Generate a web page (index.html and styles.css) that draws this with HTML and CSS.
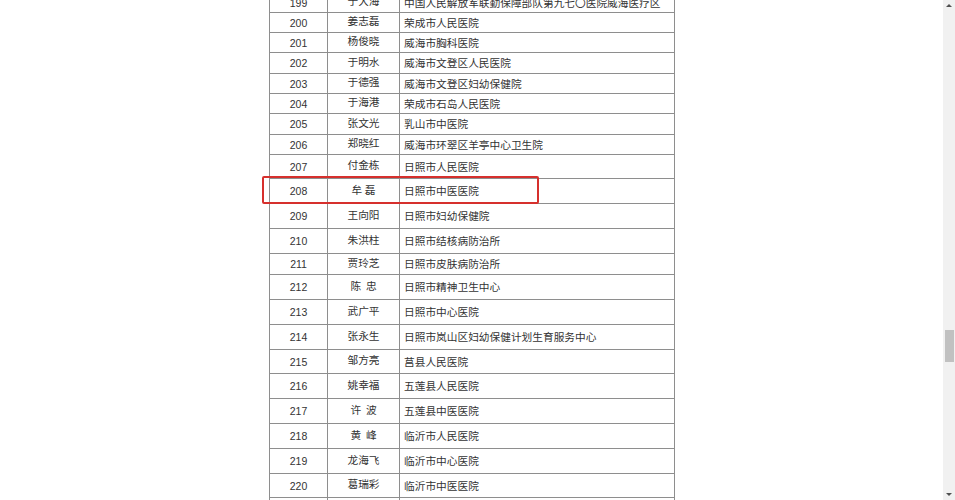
FILE: index.html
```html
<!DOCTYPE html>
<html lang="zh-CN">
<head>
<meta charset="utf-8">
<title>名单</title>
<link rel="stylesheet" href="styles.css">
</head>
<body>
<div class="page">
  <div class="sheet">
    <div class="row h20"><div class="c num">199</div><div class="c name">于大海</div><div class="c org">中国人民解放军联勤保障部队第九七〇医院威海医疗区</div></div>
    <div class="row h20"><div class="c num">200</div><div class="c name">姜志磊</div><div class="c org">荣成市人民医院</div></div>
    <div class="row h20"><div class="c num">201</div><div class="c name">杨俊晓</div><div class="c org">威海市胸科医院</div></div>
    <div class="row h21"><div class="c num">202</div><div class="c name">于明水</div><div class="c org">威海市文登区人民医院</div></div>
    <div class="row h20"><div class="c num">203</div><div class="c name">于德强</div><div class="c org">威海市文登区妇幼保健院</div></div>
    <div class="row h20"><div class="c num">204</div><div class="c name">于海港</div><div class="c org">荣成市石岛人民医院</div></div>
    <div class="row h21"><div class="c num">205</div><div class="c name">张文光</div><div class="c org">乳山市中医院</div></div>
    <div class="row h20"><div class="c num">206</div><div class="c name">郑晓红</div><div class="c org">威海市环翠区羊亭中心卫生院</div></div>
    <div class="row h24"><div class="c num">207</div><div class="c name">付金栋</div><div class="c org">日照市人民医院</div></div>
    <div class="row h25"><div class="c num">208</div><div class="c name">牟&nbsp;磊</div><div class="c org">日照市中医医院</div></div>
    <div class="row h25"><div class="c num">209</div><div class="c name">王向阳</div><div class="c org">日照市妇幼保健院</div></div>
    <div class="row h25"><div class="c num">210</div><div class="c name">朱洪柱</div><div class="c org">日照市结核病防治所</div></div>
    <div class="row h21"><div class="c num">211</div><div class="c name">贾玲芝</div><div class="c org">日照市皮肤病防治所</div></div>
    <div class="row h25"><div class="c num">212</div><div class="c name">陈&nbsp;&nbsp;忠</div><div class="c org">日照市精神卫生中心</div></div>
    <div class="row h25"><div class="c num">213</div><div class="c name">武广平</div><div class="c org">日照市中心医院</div></div>
    <div class="row h25"><div class="c num">214</div><div class="c name">张永生</div><div class="c org">日照市岚山区妇幼保健计划生育服务中心</div></div>
    <div class="row h24"><div class="c num">215</div><div class="c name">邹方亮</div><div class="c org">莒县人民医院</div></div>
    <div class="row h25"><div class="c num">216</div><div class="c name">姚幸福</div><div class="c org">五莲县人民医院</div></div>
    <div class="row h25"><div class="c num">217</div><div class="c name">许&nbsp;&nbsp;波</div><div class="c org">五莲县中医医院</div></div>
    <div class="row h25"><div class="c num">218</div><div class="c name">黄&nbsp;&nbsp;峰</div><div class="c org">临沂市人民医院</div></div>
    <div class="row h25"><div class="c num">219</div><div class="c name">龙海飞</div><div class="c org">临沂市中心医院</div></div>
    <div class="row h24"><div class="c num">220</div><div class="c name">葛瑞彩</div><div class="c org">临沂市中医医院</div></div>
    <div class="row h25"><div class="c num">221</div><div class="c name">王&nbsp;&nbsp;东</div><div class="c org">临沂市妇幼保健院</div></div>
  </div>
  <div class="mark"></div>
</div>
<div class="scrollbar">
  <div class="arrow up"></div>
  <div class="thumb"></div>
  <div class="arrow down"></div>
</div>
</body>
</html>
```
FILE: styles.css
```css
html, body {
  margin: 0;
  padding: 0;
  background: #ffffff;
  overflow: hidden;
  height: 500px;
}

.page {
  position: relative;
  padding-left: 269px;
  height: 500px;
  overflow: hidden;
}

.sheet {
  margin-top: -8px;
  width: 406px;
  font-family: "Liberation Sans", "Noto Sans CJK SC", sans-serif;
  color: #333333;
  font-size: 10.7px;
}

.row {
  display: grid;
  grid-template-columns: 58px 72px 275px;
  border-left: 1px solid #8e8e8e;
  box-sizing: border-box;
}

.h20 { height: 20px; }
.h21 { height: 21px; }
.h24 { height: 24px; }
.h25 { height: 25px; }

.c {
  box-sizing: border-box;
  border-top: 1px solid #8e8e8e;
  border-right: 1px solid #8e8e8e;
  display: flex;
  align-items: center;
  white-space: nowrap;
  overflow: hidden;
  line-height: 1;
}

.num {
  justify-content: center;
  font-size: 10.5px;
  padding-top: 1px;
}

.name {
  justify-content: center;
  font-family: "Noto Sans CJK SC", sans-serif;
  padding-bottom: 2px;
}

.org {
  padding-left: 4px;
  font-family: "Noto Sans CJK SC", sans-serif;
  padding-top: 1px;
}

.mark {
  position: absolute;
  left: 262px;
  top: 176px;
  width: 277px;
  height: 28px;
  box-sizing: border-box;
  border: 2px solid #d6302d;
  border-radius: 2px;
}

.scrollbar {
  position: fixed;
  top: 0;
  right: 0;
  width: 12px;
  height: 500px;
  background: #f1f1f1;
}

.thumb {
  position: absolute;
  left: 2px;
  top: 330px;
  width: 9px;
  height: 32px;
  background: #c1c1c1;
}

.arrow {
  position: absolute;
  left: 3px;
  width: 0;
  height: 0;
  border-left: 3px solid transparent;
  border-right: 3px solid transparent;
}

.arrow.up {
  top: 4px;
  border-bottom: 3px solid #505050;
}

.arrow.down {
  bottom: 4px;
  border-top: 3px solid #505050;
}
```
